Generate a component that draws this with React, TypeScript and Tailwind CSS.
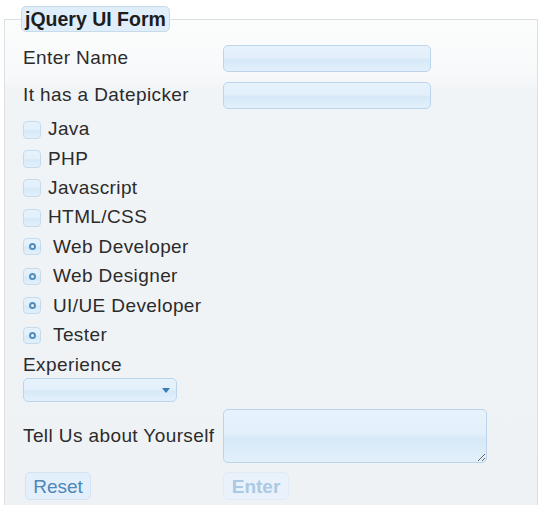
import { useState } from "react";

const glass =
  "bg-[linear-gradient(to_bottom,#e6f2fc_0%,#e3f0fb_45%,#d6e9f8_55%,#e2f0fb_100%)]";

function Row({ label, children }: { label: string; children: React.ReactNode }) {
  return (
    <div className="flex items-center h-[27px]">
      <label className="w-[200px] shrink-0">{label}</label>
      {children}
    </div>
  );
}

function Checkbox({ label }: { label: string }) {
  return (
    <div className="flex items-center h-[29.3px]">
      <span className={`w-[18px] h-[18px] rounded-[4px] border border-[#c5dbec] ${glass}`} />
      <span className="ml-[7px]">{label}</span>
    </div>
  );
}

function Radio({ label }: { label: string }) {
  return (
    <div className="flex items-center h-[29.5px]">
      <span
        className={`w-[18px] h-[17px] rounded-[4px] border border-[#c5dbec] ${glass} flex items-center justify-center`}
      >
        <span className="w-[7px] h-[7px] rounded-full border-[2px] border-[#4f8fc0] bg-[#e8f3fc]" />
      </span>
      <span className="ml-[12px]">{label}</span>
    </div>
  );
}

export default function App() {
  const [name, setName] = useState("");
  const [date, setDate] = useState("");
  const [about, setAbout] = useState("");

  return (
    <div className="w-[540px] h-[505px] bg-white overflow-hidden font-['Liberation_Sans',Arial,sans-serif] text-[19px] tracking-[0.4px] text-[#2b2b2b]">
      <fieldset className="ml-[4px] mt-[6px] w-[534px] h-[520px] border border-[#dcdfe3] pl-[18px] pt-[13px] bg-[linear-gradient(to_bottom,#fbfcfc_0px,#f8f9fa_55px,#f1f4f7_70px,#eff2f5_100%)]">
        <legend className="ml-[-2px] px-[3px] h-[26px] leading-[25px] text-[19.5px] tracking-normal font-bold text-[#1d1d1d] bg-[#dfeef9] border border-[#c5dbec] rounded-[5px]">
          jQuery UI Form
        </legend>

        <Row label="Enter Name">
          <input
            value={name}
            onChange={(e) => setName(e.target.value)}
            className={`w-[208px] h-[27px] rounded-[5px] border border-[#bcd5ea] ${glass} outline-none px-2`}
          />
        </Row>
        <div className="mt-[10px]">
          <Row label="It has a Datepicker">
            <input
              value={date}
              onChange={(e) => setDate(e.target.value)}
              className={`w-[208px] h-[27px] rounded-[5px] border border-[#bcd5ea] ${glass} outline-none px-2`}
            />
          </Row>
        </div>

        <div className="mt-[6px]">
          <Checkbox label="Java" />
          <Checkbox label="PHP" />
          <Checkbox label="Javascript" />
          <Checkbox label="HTML/CSS" />
          <Radio label="Web Developer" />
          <Radio label="Web Designer" />
          <Radio label="UI/UE Developer" />
          <Radio label="Tester" />
        </div>

        <div className="mt-[4px] leading-[22px]">Experience</div>
        <div
          className={`mt-[2px] w-[154px] h-[24px] rounded-[5px] border border-[#bcd5ea] ${glass} flex items-center justify-end pr-[6px]`}
        >
          <span className="w-0 h-0 border-l-[4px] border-r-[4px] border-t-[5px] border-l-transparent border-r-transparent border-t-[#3c7bb0]" />
        </div>

        <div className="mt-[7px] flex items-center">
          <label className="w-[200px] shrink-0">Tell Us about Yourself</label>
          <textarea
            value={about}
            onChange={(e) => setAbout(e.target.value)}
            className={`w-[264px] h-[54px] rounded-[5px] border border-[#bcd5ea] ${glass} outline-none`}
          />
        </div>

        <div className="mt-[9px] flex">
          <button className="ml-[2px] w-[66px] h-[28px] rounded-[5px] border border-[#d2e4f2] bg-[#e3effa] text-[#4f87b8] text-[19px] tracking-normal leading-none">
            Reset
          </button>
          <button
            disabled
            className="ml-[132px] w-[66px] h-[28px] rounded-[5px] border border-[#e0ebf5] bg-[#e9f2fa] text-[#abc9e2] text-[19px] tracking-normal font-bold leading-none"
          >
            Enter
          </button>
        </div>
      </fieldset>
    </div>
  );
}
